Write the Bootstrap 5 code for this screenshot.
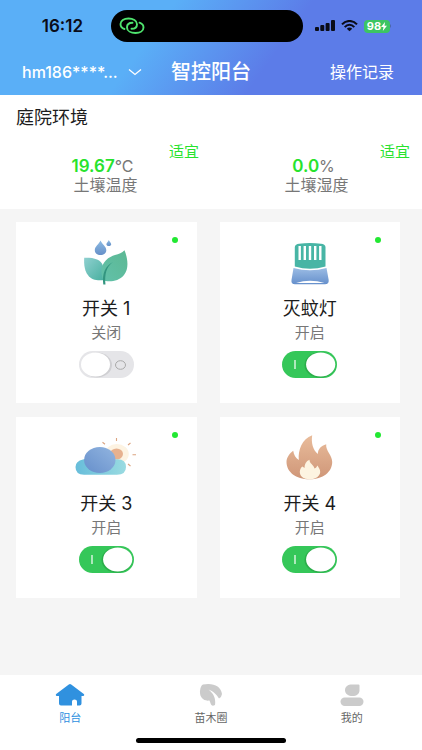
<!DOCTYPE html>
<html lang="zh-CN">
<head>
<meta charset="utf-8">
<meta name="viewport" content="width=device-width, initial-scale=1">
<title>智控阳台</title>
<link href="https://cdn.jsdelivr.net/npm/bootstrap@5.3.0/dist/css/bootstrap.min.css" rel="stylesheet">
<style>
body{font-family:Inter,"Noto Sans CJK SC",sans-serif;background:#f5f5f5;color:#1c1c1c}
.app-head{background:linear-gradient(126deg,#5aaff7 36%,#5c7ce8 64%)}
.status-row{height:52px;padding-top:10px;display:grid;grid-template-columns:111fr 192px 119fr;color:#0a0c18}
.clock{font-size:17px;line-height:32px;font-weight:600;padding-right:28px}
.island{background:#000;border-radius:16px;height:32px;padding-left:8px}
.signals{height:32px;padding-left:12px;gap:6px}
.battery{background:#3cc563;color:#fff;font-size:11px;line-height:13px;font-weight:700;border-radius:4px;width:26px;height:13px}
.title-row{height:43px;padding-bottom:4px;display:grid;grid-template-columns:1fr auto 1fr;align-items:center}
.account{width:120px;margin-left:22px;padding:0 24px 0 0;border:0;border-radius:0;color:#fff;font-size:16px;line-height:20px;font-weight:500;background-color:transparent;background-image:url("data:image/svg+xml,%3Csvg xmlns='http://www.w3.org/2000/svg' viewBox='0 0 14 8'%3E%3Cpath d='M1 1.500l6 5 6-5' fill='none' stroke='white' stroke-width='1.300'/%3E%3C/svg%3E");background-position:right center;background-size:14px 8px}
.page-title{font-size:20px;line-height:28px;font-weight:500}
.records{font-size:16px;line-height:24px;padding-right:28px}
.env{height:114px;padding-top:9px}
.env-title{font-size:18px;line-height:28px;padding-left:16px}
.tag{color:#27e32d;font-size:15px;line-height:20px;padding-right:12px;margin-top:10px}
.reading{font-size:17px;line-height:18px;color:#777;margin-top:-5px;padding-right:6px}
.reading strong{color:#27e32d;font-weight:600}
.reading small{font-size:16px}
.reading-name{font-size:16px;line-height:20px;color:#777}
.devices{display:grid;grid-template-columns:1fr 1fr;gap:14px 23px;padding:13px 22px 13px 16px}
.device{background:#fff;min-height:181px;padding-top:16px}
.device svg{width:64px;height:50px}
.online{width:6px;height:6px;border-radius:50%;background:#22e832;top:15px;right:19px}
.device-name{font-size:18px;line-height:28px;margin-top:7px}
.device-state{font-size:15px;line-height:20px;color:#777}
.device .form-check-input.power{float:none;width:55px;height:27px;margin:8px 0 0;border:0;border-radius:14px;background-color:#e5e5e8;background-position:center;background-size:100% 100%;background-image:url("data:image/svg+xml,%3Csvg xmlns='http://www.w3.org/2000/svg' viewBox='0 0 55 27'%3E%3Cellipse cx='18' cy='14' rx='15' ry='12.5' fill='%23cfcfd2'/%3E%3Cellipse cx='16.5' cy='13.5' rx='14.5' ry='12' fill='white'/%3E%3Cellipse cx='41.5' cy='14' rx='5' ry='4.3' fill='none' stroke='%23aaaaaa'/%3E%3C/svg%3E")}
.device .form-check-input.power:checked{background-color:#35c759;background-image:url("data:image/svg+xml,%3Csvg xmlns='http://www.w3.org/2000/svg' viewBox='0 0 55 27'%3E%3Cellipse cx='38' cy='14' rx='15.5' ry='12.7' fill='%232bae4a'/%3E%3Cellipse cx='38.7' cy='13.5' rx='14.6' ry='12' fill='white'/%3E%3Cpath d='M13 9v9' stroke='white' stroke-width='1.2'/%3E%3C/svg%3E")}
.tabs-foot{background:#fff;height:75px;padding:8px 0 7px}
.tab-item{color:#666;font-size:11px;line-height:16px}
.tab-item.active{color:#3091df}
.tab-item svg{width:32px;height:24px;margin-bottom:3px}
.home-bar{width:150px;height:5px;border-radius:3px;background:#000}
</style>
<script src="https://cdn.jsdelivr.net/npm/bootstrap@5.3.0/dist/js/bootstrap.bundle.min.js"></script>
</head>
<body class="d-flex flex-column min-vh-100">
<header class="app-head text-white">
  <div class="status-row">
    <div class="clock text-end">16:12</div>
    <div class="island d-flex align-items-center">
      <svg width="26" height="18" viewBox="0 0 26 18" fill="none" stroke="#4fe36e" stroke-width="1.900" stroke-linecap="round"><path d="M5.500 12C2.800 11.200 1.500 9 1.500 7C1.500 3.500 5 1.500 9.500 1.500S18 3.600 18 7.200c0 2.800-2 4.600-5.500 4.600"/><path d="M20.500 5.700c2.600.8 4 2.500 4 4.800 0 3.500-3.500 5.500-8 5.500S8 14 8 10.400c0-2.800 2-4.600 5.500-4.600"/></svg>
    </div>
    <div class="signals d-flex align-items-center">
      <svg width="20" height="12" viewBox="0 0 20 12" fill="#0a0c18"><rect y="7" width="4" height="4" rx="1"/><rect x="5.300" y="5" width="4" height="6" rx="1"/><rect x="10.600" y="3" width="4" height="8" rx="1"/><rect x="16" y="0" width="4" height="11" rx="1"/></svg>
      <svg width="17" height="12" viewBox="0 0 17 12" fill="none" stroke="#0a0c18" stroke-width="2"><path d="M1 4.300C5-.2 12-.2 16 4.300M3.700 7.100c2.800-3 6.800-3 9.600 0"/><path d="M8.500 11.300L5.800 8.700c1.600-1.500 3.800-1.500 5.400 0z" fill="#0a0c18" stroke="none"/></svg>
      <div class="d-flex align-items-center"><div class="battery d-flex align-items-center justify-content-center">98<svg width="6" height="9" viewBox="0 0 6 9" fill="#fff"><path d="M4 0L0 5h2.500L1.800 9 6 3.700H3.500z"/></svg></div><svg width="2" height="4" viewBox="0 0 2 4"><path d="M0 0q2 2 0 4z" fill="#4b63a8"/></svg></div>
    </div>
  </div>
  <div class="title-row">
    <select class="form-select account" aria-label="账号"><option>hm186****...</option></select>
    <h1 class="page-title m-0">智控阳台</h1>
    <a class="records text-white text-decoration-none text-end" href="#records">操作记录</a>
  </div>
</header>
<main class="flex-grow-1">
  <section class="env bg-white">
    <h2 class="env-title m-0 fw-normal">庭院环境</h2>
    <div class="row g-0 text-center">
      <div class="col-6"><div class="tag text-end">适宜</div><div class="reading"><strong>19.67</strong><small>°C</small></div><div class="reading-name">土壤温度</div></div>
      <div class="col-6"><div class="tag text-end">适宜</div><div class="reading"><strong>0.0</strong><small>%</small></div><div class="reading-name">土壤湿度</div></div>
    </div>
  </section>
  <section class="devices">
    <article class="device position-relative d-flex flex-column align-items-center">
      <span class="online position-absolute"></span>
      <svg viewBox="0 0 64 50"><defs><linearGradient id="leafA" x2="1" y2="1"><stop stop-color="#8fd0d0"/><stop offset="1" stop-color="#48b09f"/></linearGradient><linearGradient id="leafB" x1="1" x2="0" y2="1"><stop stop-color="#5cb893"/><stop offset="1" stop-color="#62c1aa"/></linearGradient><linearGradient id="drop" x2="0" y2="1"><stop stop-color="#8dbbe3"/><stop offset="1" stop-color="#6690c8"/></linearGradient></defs>
      <path d="M10.200 19.700C20 19.500 27 21 29 28L30 42C18 44 9 38 10.200 19.700Z" fill="url(#leafA)"/><path d="M50.500 12.300C54 21 55 31 50 37C45 43 38 43.700 31.700 43C30 43 29 42 28.500 40C24 26 34 19 41 17C45 16 48 15 50.500 12.300Z" fill="url(#leafB)"/><path d="M39 24C31 28 28 36 29.300 46.500H31.500C30.500 37 32 29 39 24Z" fill="#32957f"/><path d="M26.500 2.500C28 6 32.300 8.500 32.300 12.200C32.300 15 29.800 17 26.500 17S20.800 15 20.800 12.200C20.800 8.500 25 6 26.500 2.500Z" fill="url(#drop)"/><path d="M34.800 2C35.500 4 37.200 4.700 37.200 6.200C37.200 7.300 36.200 8 34.800 8S32.400 7.300 32.400 6.200C32.400 4.700 34.200 4 34.800 2Z" fill="url(#drop)"/></svg>
      <h3 class="device-name mb-0 fw-normal">开关 1</h3><div class="device-state">关闭</div>
      <div class="form-switch p-0 m-0 d-flex"><input class="form-check-input power" type="checkbox" role="switch" aria-label="开关 1"></div>
    </article>
    <article class="device position-relative d-flex flex-column align-items-center">
      <span class="online position-absolute"></span>
      <svg viewBox="0 0 64 50"><defs><linearGradient id="base" x2="0" y2="1"><stop stop-color="#9bbce4"/><stop offset="1" stop-color="#6690cc"/></linearGradient></defs>
      <path d="M16.800 9C16.800 7 19 6 21 5.700Q32 4.300 43 5.700C45.500 6 47.500 7 47.500 9V28.500Q32 33 16.800 28.500Z" fill="#48b5a5"/><path d="M21.700 8v14M26.800 8v14M32 8v14M37.200 8v14M42.300 8v14" stroke="#fff" stroke-width="2.400"/><path d="M15.500 30Q32 34.500 48.500 30L50.700 42C51 45 49.500 46.200 47 46.200H17C14.500 46.200 13 45 13.500 42Z" fill="url(#base)"/><path d="M18 45Q32 40.500 46.500 45Z" fill="#fff"/></svg>
      <h3 class="device-name mb-0 fw-normal">灭蚊灯</h3><div class="device-state">开启</div>
      <div class="form-switch p-0 m-0 d-flex"><input class="form-check-input power" type="checkbox" role="switch" aria-label="灭蚊灯" checked></div>
    </article>
    <article class="device position-relative d-flex flex-column align-items-center">
      <span class="online position-absolute"></span>
      <svg viewBox="0 0 64 50"><defs><linearGradient id="cloud"><stop stop-color="#67bdda"/><stop offset="1" stop-color="#9adbe1"/></linearGradient><linearGradient id="ball" x1="1" x2="0" y2="1"><stop stop-color="#92b5e0"/><stop offset="1" stop-color="#668fcb"/></linearGradient></defs>
      <ellipse cx="42.800" cy="21" rx="12" ry="10" fill="#fdf3e2"/><ellipse cx="42.500" cy="21" rx="6.500" ry="5.500" fill="#e6b18f"/><path d="M42.500 5v3M28.500 9.300l2.500 2M56.500 10l-2.500 2M58.500 21.700h3.500M54 31l2.500 2" stroke="#dba480" stroke-width="1.100"/><path d="M9 26.500Q18 23 28 31L37 27Q52 23.500 52 34Q52 41.700 43 41.700H10Q1.500 41.700 1.500 34Q1.500 28 9 26.500Z" fill="url(#cloud)"/><ellipse cx="25.800" cy="27" rx="15.700" ry="13" fill="url(#ball)"/></svg>
      <h3 class="device-name mb-0 fw-normal">开关 3</h3><div class="device-state">开启</div>
      <div class="form-switch p-0 m-0 d-flex"><input class="form-check-input power" type="checkbox" role="switch" aria-label="开关 3" checked></div>
    </article>
    <article class="device position-relative d-flex flex-column align-items-center">
      <span class="online position-absolute"></span>
      <svg viewBox="0 0 64 50"><defs><linearGradient id="fire" x2="0" y2="1"><stop stop-color="#e9bc9b"/><stop offset="1" stop-color="#cf9678"/></linearGradient></defs>
      <path d="M31.500 46.300C18 46.300 8.500 39 8.500 29C8.500 24 12 20 15.200 17.700C16 22 17.500 25 20.800 27C20 17 24 6 34.200 2.300C33 10 35 17 39.800 21C40 16 43 13 48.200 11.300C47.500 18 54.200 22 54.200 29C54.200 39 45 46.300 31.500 46.300Z" fill="url(#fire)"/><path d="M31.500 46.300C25 46 21.800 43 21.800 38.700C22 36 23 34.500 24.500 33.500L26.500 35C26.500 31 28 28 31.500 26.700C31.500 31 35.500 31 36.500 35.500C38 35 38.500 34 39.500 32.500C40.500 34.500 42.300 36 42.200 39C42 43 38 46.300 31.500 46.300Z" fill="#fdf4e1"/></svg>
      <h3 class="device-name mb-0 fw-normal">开关 4</h3><div class="device-state">开启</div>
      <div class="form-switch p-0 m-0 d-flex"><input class="form-check-input power" type="checkbox" role="switch" aria-label="开关 4" checked></div>
    </article>
  </section>
</main>
<footer class="tabs-foot d-flex flex-column justify-content-between align-items-center">
  <nav class="row g-0 w-100 text-center">
    <a class="col tab-item active text-decoration-none d-flex flex-column align-items-center" href="#balcony" aria-current="page"><svg viewBox="0 0 32 24" fill="#3091df"><path d="M14.800 1.500Q16 .6 17.200 1.500L29.800 11Q31 12.200 29.500 13H27.500V20.500Q27.500 22.500 25.500 22.500H23V18.500Q23 16.500 20.500 16.500T18 18.500V22.500H7Q5 22.500 5 20.500V13H2.500Q1 12.200 2.200 11Z"/></svg>阳台</a>
    <a class="col tab-item text-decoration-none d-flex flex-column align-items-center" href="#plants"><svg viewBox="0 0 32 24" fill="#cbcbcb"><path d="M8 1.500C18-.5 26 3 27 11Q26.500 14.500 24 15.500C22 12 18 8 13.500 6.500C18.500 10.500 21 15 20 22Q17 23.500 16 21.500L14.500 17.500C8 18.500 4.500 14 5 8Q5.500 2.500 8 1.500Z"/></svg>苗木圈</a>
    <a class="col tab-item text-decoration-none d-flex flex-column align-items-center" href="#me"><svg viewBox="0 0 32 24" fill="#cbcbcb"><path d="M16 1.500H22.500Q23.500 1.500 23.500 2.500V7C23.500 11 20.500 13 16.500 13S9 11 9 7.200S12 1.500 16 1.500Z"/><rect x="4.500" y="14.500" width="23" height="8.500" rx="4.200"/></svg>我的</a>
  </nav>
  <div class="home-bar"></div>
</footer>
</body>
</html>
